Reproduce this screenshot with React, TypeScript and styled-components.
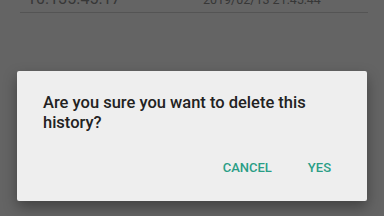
import React from 'react'
import styled, { createGlobalStyle } from 'styled-components'

const GlobalStyle = createGlobalStyle`
  html, body {
    margin: 0;
    padding: 0;
    width: 384px;
    height: 216px;
    overflow: hidden;
    font-family: Roboto, "Liberation Sans", sans-serif;
    background: #fafafa;
  }
`

const Screen = styled.div`
  position: relative;
  width: 384px;
  height: 216px;
  background: #fafafa;
  overflow: hidden;
`

const HistoryRow = styled.div`
  display: flex;
  align-items: flex-end;
  height: 12px;
  margin: 0 16px 0 20px;
  padding-left: 7px;
  border-bottom: 1px solid #d2d2d2;
`

const Host = styled.div`
  width: 176px;
  font-size: 16px;
  line-height: 16px;
  color: #8a8a8a;
  margin-bottom: 5px;
`

const Stamp = styled.div`
  font-size: 12.5px;
  line-height: 14px;
  color: #8a8a8a;
  margin-bottom: 5px;
`

const Scrim = styled.div`
  position: absolute;
  inset: 0;
  background: rgba(0, 0, 0, 0.6);
  padding-top: 71px;
`

const Dialog = styled.div`
  margin: 0 17px;
  height: 130px;
  box-sizing: border-box;
  background: #eeeeee;
  border-radius: 2px;
  box-shadow: 0 6px 14px rgba(0, 0, 0, 0.35);
  display: flex;
  flex-direction: column;
  justify-content: space-between;
  padding: 22px 26px 25px 26px;
`

const Message = styled.p`
  margin: 0;
  font-size: 16.5px;
  line-height: 20px;
  font-weight: 500;
  color: #222222;
`

const Actions = styled.div`
  display: flex;
  justify-content: flex-end;
  gap: 36px;
  padding-right: 10px;
`

const ActionButton = styled.button`
  border: none;
  background: none;
  padding: 0;
  font-family: inherit;
  font-size: 13px;
  font-weight: 500;
  line-height: 16px;
  color: #2a9e86;
  text-transform: uppercase;
`

const App = () => (
  <Screen>
    <GlobalStyle />
    <HistoryRow>
      <Host>10.135.45.17</Host>
      <Stamp>2019/02/13 21:45:44</Stamp>
    </HistoryRow>
    <Scrim>
      <Dialog>
        <Message>Are you sure you want to delete this history?</Message>
        <Actions>
          <ActionButton>Cancel</ActionButton>
          <ActionButton>Yes</ActionButton>
        </Actions>
      </Dialog>
    </Scrim>
  </Screen>
)

export default App
